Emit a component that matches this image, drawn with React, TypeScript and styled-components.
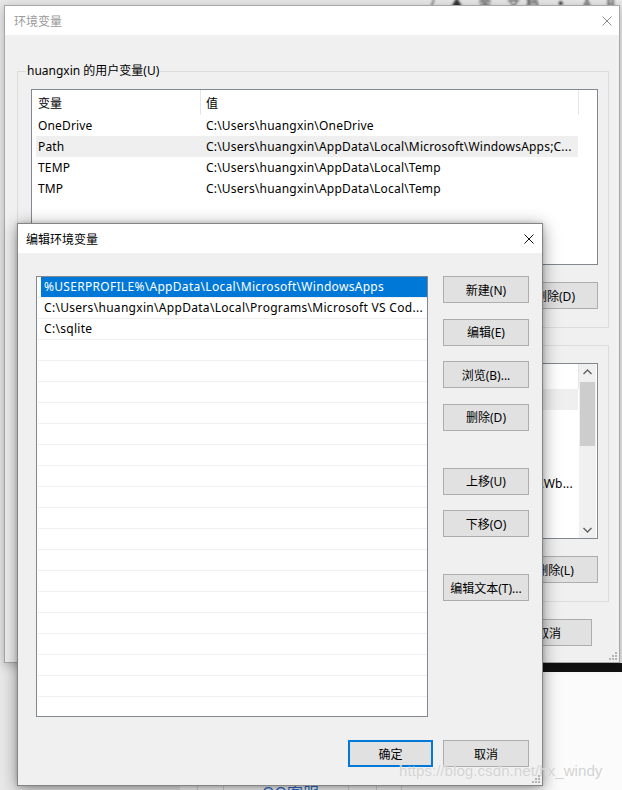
import React from "react";
import styled, { createGlobalStyle, css } from "styled-components";

const UI_FONT = `"Noto Sans", "Noto Sans CJK SC", sans-serif`;

const Global = createGlobalStyle`
  html, body { margin: 0; padding: 0; }
  body {
    width: 622px; height: 790px; overflow: hidden;
    font-family: ${UI_FONT};
    font-size: 12px; color: #000;
  }
  * { box-sizing: border-box; }
`;

/* ---------- desktop ---------- */

const Desktop = styled.div`
  position: relative;
  width: 622px;
  height: 790px;
  overflow: hidden;
  background: #e9e9e9;
`;

const TopBlur = styled.div`
  position: absolute;
  left: 430px;
  top: -7px;
  font-size: 13px;
  color: #333;
  filter: blur(1.2px);
  letter-spacing: 6px;
  white-space: nowrap;
`;

const DarkBand = styled.div`
  position: absolute;
  left: 300px;
  top: 663px;
  width: 322px;
  height: 9px;
  background: #121212;
`;

const WebPage = styled.div`
  position: absolute;
  left: 180px;
  top: 672px;
  width: 442px;
  height: 118px;
  background: #fbfbfb;
`;

const PageLine = styled.div<{ $x: number }>`
  position: absolute;
  top: 100px;
  left: ${(p) => p.$x}px;
  width: 1px;
  height: 18px;
  background: #d8d8d8;
`;

const QQText = styled.div`
  position: absolute;
  left: 82px;
  top: 108px;
  font-size: 16px;
  color: #2f6fd0;
  white-space: nowrap;
`;

/* ---------- windows ---------- */

const Window = styled.div<{ $active?: boolean }>`
  position: absolute;
  display: flex;
  flex-direction: column;
  background: #f0f0f0;
  border: 1px solid ${(p) => (p.$active ? "#858585" : "#a8a8a8")};
  box-shadow: ${(p) =>
    p.$active
      ? "0 3px 16px rgba(0,0,0,0.42), 0 0 4px rgba(0,0,0,0.18)"
      : "0 2px 10px rgba(0,0,0,0.25)"};
`;

const BackWindow = styled(Window)`
  left: 4px;
  top: 5px;
  width: 616px;
  height: 658px;
`;

const FrontWindow = styled(Window)`
  left: 17px;
  top: 223px;
  width: 526px;
  height: 563px;
`;

const TitleBar = styled.div`
  height: 29px;
  flex: none;
  background: #fff;
  display: flex;
  align-items: center;
  justify-content: space-between;
`;

const TitleText = styled.span<{ $active?: boolean; $pad: number }>`
  padding-left: ${(p) => p.$pad}px;
  font-size: 12px;
  color: ${(p) => (p.$active ? "#000" : "#9a9a9a")};
`;

const CloseIcon = styled.svg<{ $pad: number }>`
  width: 10px;
  height: 10px;
  margin-right: ${(p) => p.$pad}px;
  flex: none;
`;

const Grip = styled.svg`
  position: absolute;
  right: 2px;
  bottom: 2px;
  width: 8px;
  height: 8px;
`;

const ResizeGrip = () => (
  <Grip viewBox="0 0 8 8">
    {[
      [6, 0],
      [3, 3],
      [6, 3],
      [0, 6],
      [3, 6],
      [6, 6],
    ].map(([x, y], i) => (
      <rect key={i} x={x} y={y} width={2} height={2} fill="#b4b4b4" />
    ))}
  </Grip>
);

const Close = ({ active, pad }: { active?: boolean; pad: number }) => (
  <CloseIcon viewBox="0 0 10 10" $pad={pad}>
    <path
      d="M0.5 0.5 L9.5 9.5 M9.5 0.5 L0.5 9.5"
      stroke={active ? "#111" : "#8c8c8c"}
      strokeWidth={1}
      fill="none"
    />
  </CloseIcon>
);

/* ---------- back window body ---------- */

const BackBody = styled.div`
  flex: 1;
  display: flex;
  flex-direction: column;
  padding: 36px 10px 15px 12px;
`;

const Group = styled.div<{ $gap?: number }>`
  border: 1px solid #dcdcdc;
  display: flex;
  flex-direction: column;
  padding: 0 10px 18px 13px;
  margin-top: ${(p) => p.$gap ?? 0}px;
`;

const Legend = styled.div`
  align-self: flex-start;
  height: 16px;
  line-height: 16px;
  margin: -9px 0 10px -5px;
  padding: 0 1px;
  background: #f0f0f0;
  white-space: nowrap;
`;

const ListBox = styled.div`
  height: 176px;
  border: 1px solid #828790;
  background: #fff;
  display: flex;
  overflow: hidden;
`;

const ListMain = styled.div`
  width: 547px;
  flex: none;
  display: flex;
  flex-direction: column;
`;

const Header = styled.div`
  display: flex;
  height: 25px;
  flex: none;
`;

const HeadCell = styled.div<{ $w: number; $pad: number }>`
  width: ${(p) => p.$w}px;
  flex: none;
  padding-left: ${(p) => p.$pad}px;
  border-right: 1px solid #e5e5e5;
  display: flex;
  align-items: center;
`;

const VarRow = styled.div<{ $hl?: boolean }>`
  margin-left: 4px;
  width: 542px;
  height: 21px;
  flex: none;
  display: grid;
  grid-template-columns: 164px 1fr;
  align-items: center;
  background: ${(p) => (p.$hl ? "#efefef" : "transparent")};
`;

const VarName = styled.span`
  padding-left: 2px;
  white-space: nowrap;
  overflow: hidden;
  letter-spacing: 0.15px;
`;

const VarValue = styled.span`
  padding-left: 6px;
  white-space: nowrap;
  overflow: hidden;
  letter-spacing: 0.2px;
`;

const ScrollBar = styled.div`
  width: 17px;
  flex: none;
  background: #f0f0f0;
  display: flex;
  flex-direction: column;
  align-items: center;
`;

const ScrollArrow = styled.svg`
  width: 17px;
  height: 17px;
  flex: none;
`;

const ScrollTrack = styled.div`
  flex: 1;
  width: 100%;
  padding: 1px 1px 0;
`;

const Thumb = styled.div`
  height: 64px;
  background: #cdcdcd;
`;

const BtnRow = styled.div<{ $gap?: number; $pr?: number }>`
  display: flex;
  justify-content: flex-end;
  gap: 10px;
  margin-top: ${(p) => p.$gap ?? 17}px;
  padding-right: ${(p) => p.$pr ?? 0}px;
`;

const Btn = styled.button<{ $w?: number; $primary?: boolean; $spaced?: boolean }>`
  width: ${(p) => p.$w ?? 86}px;
  height: 27px;
  flex: none;
  padding: 0;
  margin: 0;
  font-family: ${UI_FONT};
  font-size: 12px;
  color: #000;
  background: #e1e1e1;
  border: 1px solid #adadad;
  border-radius: 0;
  display: flex;
  align-items: center;
  justify-content: center;
  ${(p) =>
    p.$primary &&
    css`
      border: 2px solid #0078d7;
    `}
  ${(p) =>
    p.$spaced &&
    css`
      margin-top: 21.5px;
    `}
`;

/* ---------- front window body ---------- */

const FrontBody = styled.div`
  flex: 1;
  display: flex;
  flex-direction: column;
  gap: 23px;
  padding: 23px 13px 17px 18px;
`;

const FrontMain = styled.div`
  display: flex;
  gap: 15px;
`;

const PathList = styled.div`
  width: 392px;
  height: 441px;
  flex: none;
  border: 1px solid #828790;
  background: #fff;
  overflow: hidden;
`;

const PathRow = styled.div`
  height: 21px;
  margin-left: 1px;
  border-bottom: 1px solid #efefef;
  display: flex;
`;

const PathItem = styled.div<{ $sel?: boolean }>`
  flex: 1;
  min-width: 0;
  margin-left: 3px;
  padding-left: 3px;
  line-height: 20px;
  white-space: nowrap;
  overflow: hidden;
  letter-spacing: 0.3px;
  background: ${(p) => (p.$sel ? "#0078d7" : "transparent")};
  color: ${(p) => (p.$sel ? "#fff" : "#000")};
`;

const BtnCol = styled.div`
  display: flex;
  flex-direction: column;
  gap: 15.5px;
`;

const Watermark = styled.div`
  position: absolute;
  left: 399px;
  top: 762px;
  font-family: "Liberation Sans", Arial, sans-serif;
  font-size: 15.2px;
  color: rgba(205, 205, 205, 0.9);
  text-shadow: 0 0 1px rgba(255, 255, 255, 0.9);
  white-space: nowrap;
  pointer-events: none;
`;

/* ---------- data ---------- */

const userVars = [
  ["OneDrive", "C:\\Users\\huangxin\\OneDrive"],
  ["Path", "C:\\Users\\huangxin\\AppData\\Local\\Microsoft\\WindowsApps;C..."],
  ["TEMP", "C:\\Users\\huangxin\\AppData\\Local\\Temp"],
  ["TMP", "C:\\Users\\huangxin\\AppData\\Local\\Temp"],
];

const sysVars = [
  ["ComSpec", "C:\\Windows\\system32\\cmd.exe"],
  ["DriverData", "C:\\Windows\\System32\\Drivers\\DriverData"],
  ["NUMBER_OF_PROCESSORS", "8"],
  ["OS", "Windows_NT"],
  ["Path", "C:\\Windows\\system32;C:\\Windows;C:\\Windows\\System32\\Wb..."],
  ["PATHEXT", ".COM;.EXE;.BAT;.CMD;.VBS;.VBE;.JS"],
  ["PROCESSOR_ARCHITECTURE", "AMD64"],
];

const paths = [
  "%USERPROFILE%\\AppData\\Local\\Microsoft\\WindowsApps",
  "C:\\Users\\huangxin\\AppData\\Local\\Programs\\Microsoft VS Cod...",
  "C:\\sqlite",
];

const Chevron = ({ up }: { up?: boolean }) => (
  <ScrollArrow viewBox="0 0 17 17">
    <path
      d={up ? "M4.5 10 L8.5 6 L12.5 10" : "M4.5 7 L8.5 11 L12.5 7"}
      stroke="#606060"
      strokeWidth={1.4}
      fill="none"
    />
  </ScrollArrow>
);

const VarList = ({
  rows,
  hl,
  scroll,
}: {
  rows: string[][];
  hl: number;
  scroll?: boolean;
}) => (
  <ListBox>
    <ListMain>
      <Header>
        <HeadCell $w={169} $pad={6}>
          变量
        </HeadCell>
        <HeadCell $w={378} $pad={5}>
          值
        </HeadCell>
      </Header>
      {rows.map(([n, v], i) => (
        <VarRow key={n} $hl={i === hl}>
          <VarName>{n}</VarName>
          <VarValue>{v}</VarValue>
        </VarRow>
      ))}
    </ListMain>
    {scroll && (
      <ScrollBar>
        <Chevron up />
        <ScrollTrack>
          <Thumb />
        </ScrollTrack>
        <Chevron />
      </ScrollBar>
    )}
  </ListBox>
);

export default function App() {
  return (
    <Desktop>
      <Global />
      <TopBlur>/ ▲ 金 文档 ▪ A B V</TopBlur>
      <DarkBand />
      <WebPage>
        <PageLine $x={17} />
        <PageLine $x={43} />
        <PageLine $x={168} />
        <PageLine $x={196} />
        <PageLine $x={221} />
        <QQText>QQ客服</QQText>
      </WebPage>

      <BackWindow>
        <TitleBar>
          <TitleText $pad={9}>环境变量</TitleText>
          <Close pad={7} />
        </TitleBar>
        <BackBody>
          <Group>
            <Legend>huangxin 的用户变量(U)</Legend>
            <VarList rows={userVars} hl={1} />
            <BtnRow>
              <Btn>新建(N)...</Btn>
              <Btn>编辑(E)...</Btn>
              <Btn>删除(D)</Btn>
            </BtnRow>
          </Group>
          <Group $gap={17}>
            <Legend>系统变量(S)</Legend>
            <VarList rows={sysVars} hl={0} scroll />
            <BtnRow>
              <Btn>新建(W)...</Btn>
              <Btn>编辑(I)...</Btn>
              <Btn>删除(L)</Btn>
            </BtnRow>
          </Group>
          <BtnRow $pr={17}>
            <Btn>确定</Btn>
            <Btn>取消</Btn>
          </BtnRow>
        </BackBody>
        <ResizeGrip />
      </BackWindow>

      <FrontWindow $active>
        <TitleBar>
          <TitleText $active $pad={8}>
            编辑环境变量
          </TitleText>
          <Close active pad={8} />
        </TitleBar>
        <FrontBody>
          <FrontMain>
            <PathList>
              {Array.from({ length: 21 }).map((_, i) => (
                <PathRow key={i}>
                  <PathItem $sel={i === 0}>{paths[i] ?? ""}</PathItem>
                </PathRow>
              ))}
            </PathList>
            <BtnCol>
              <Btn>新建(N)</Btn>
              <Btn>编辑(E)</Btn>
              <Btn>浏览(B)...</Btn>
              <Btn>删除(D)</Btn>
              <Btn $spaced>上移(U)</Btn>
              <Btn>下移(O)</Btn>
              <Btn $spaced>编辑文本(T)...</Btn>
            </BtnCol>
          </FrontMain>
          <BtnRow $gap={0}>
            <Btn $w={85} $primary>
              确定
            </Btn>
            <Btn>取消</Btn>
          </BtnRow>
        </FrontBody>
        <ResizeGrip />
      </FrontWindow>

      <Watermark>https://blog.csdn.net/hx_windy</Watermark>
    </Desktop>
  );
}
